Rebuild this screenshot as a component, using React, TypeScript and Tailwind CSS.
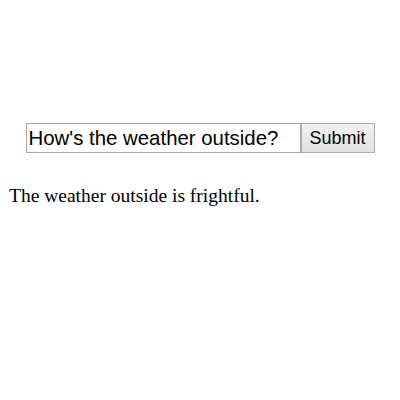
import { useState } from "react"

const App = () => {
    const [question, setQuestion] = useState("How's the weather outside?");
    return (
        <div className="w-[400px] h-[400px] bg-white">
            {/* form */}
            <div className="flex justify-center pt-[123px]">
                <input
                    className="w-[275px] h-[30px] border border-[#a9a9a9] px-[2px] text-[20.4px] text-black outline-none font-['Liberation_Sans',Arial,sans-serif]"
                    value={question}
                    onChange={(e) => setQuestion(e.target.value)}
                />
                <button className="w-[74px] h-[30px] border border-[#adadad] bg-gradient-to-b from-[#f2f2f2] to-[#e2e2e2] text-[18px] text-black font-['Liberation_Sans',Arial,sans-serif]">
                    Submit
                </button>
            </div>
            {/* answer */}
            <p className="mt-[31px] ml-[9px] text-[19.5px] leading-[24px] text-black font-['Liberation_Serif','Times_New_Roman',serif]">
                The weather outside is frightful.
            </p>
        </div>
    )
}

export default App
